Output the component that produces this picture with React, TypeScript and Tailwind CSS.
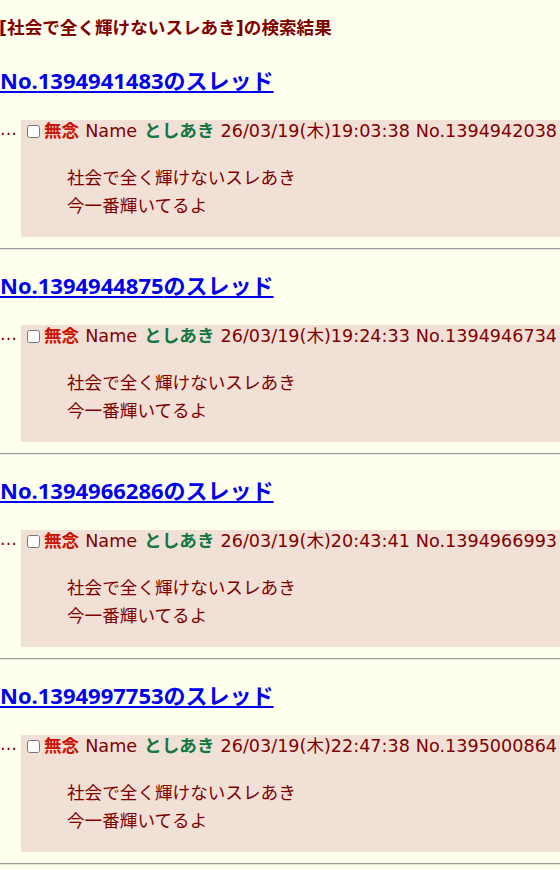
import React from "react";

interface Thread_I {
  id: string;
  date: string;
  no: string;
}

const threads: Thread_I[] = [
  { id: "1394941483", date: "26/03/19(木)19:03:38", no: "1394942038" },
  { id: "1394944875", date: "26/03/19(木)19:24:33", no: "1394946734" },
  { id: "1394966286", date: "26/03/19(木)20:43:41", no: "1394966993" },
  { id: "1394997753", date: "26/03/19(木)22:47:38", no: "1395000864" },
];

const font = {
  fontFamily: '"DejaVu Sans", "Noto Sans CJK JP", sans-serif',
};

function Post({ thread }: { thread: Thread_I }) {
  return (
    <div className="flex flex-row items-start">
      <div className="w-[21px] shrink-0 h-[22px] leading-[19px] text-[17px] text-[#800000] tracking-[-1px] overflow-hidden">
        …
      </div>
      <div className="flex-1 bg-[#f0e0d6] h-[117px] pl-[2px] overflow-hidden">
        <div className="h-[22px] leading-[22px] whitespace-nowrap flex flex-row items-center">
          <input type="checkbox" className="w-[13px] h-[13px] ml-[4px] mr-[4px] shrink-0" />
          <span className="font-bold text-[#cc1105]">無念</span>
          <span className="ml-[6px]">Name</span>
          <span className="ml-[7px] font-bold text-[#117743]">としあき</span>
          <span className="ml-[6px]">{thread.date}</span>
          <span className="ml-[6px]">No.{thread.no}</span>
        </div>
        <div className="mt-[22px] pl-[44px] leading-[28px]">
          <div>社会で全く輝けないスレあき</div>
          <div>今一番輝いてるよ</div>
        </div>
      </div>
    </div>
  );
}

export default function App() {
  return (
    <div
      className="w-[560px] min-h-[870px] bg-[#ffffee] text-[#800000] text-[17.6px] overflow-hidden"
      style={font}
    >
      <h1 className="pt-[16px] -ml-[1px] h-[40px] leading-[24px] text-[17.6px] font-bold whitespace-nowrap">
        [社会で全く輝けないスレあき]の検索結果
      </h1>
      {threads.map((thread, index) => (
        <div key={thread.id} className="flex flex-col">
          <div
            className={`${index === 0 ? "mt-[26px]" : "mt-[21px]"} h-[28px] leading-[28px] whitespace-nowrap`}
          >
            <a
              href="#"
              className="text-[22px] font-bold text-[#0000ee] underline"
              style={{ fontFamily: '"Open Sans", "Noto Sans CJK JP", sans-serif' }}
            >
              No.{thread.id}のスレッド
            </a>
          </div>
          <div className="mt-[26px]">
            <Post thread={thread} />
          </div>
          <div className="mt-[11px] h-[2px] border-t border-t-[#9a9a9a] border-b border-b-[#e6e6dc]" />
        </div>
      ))}
    </div>
  );
}
